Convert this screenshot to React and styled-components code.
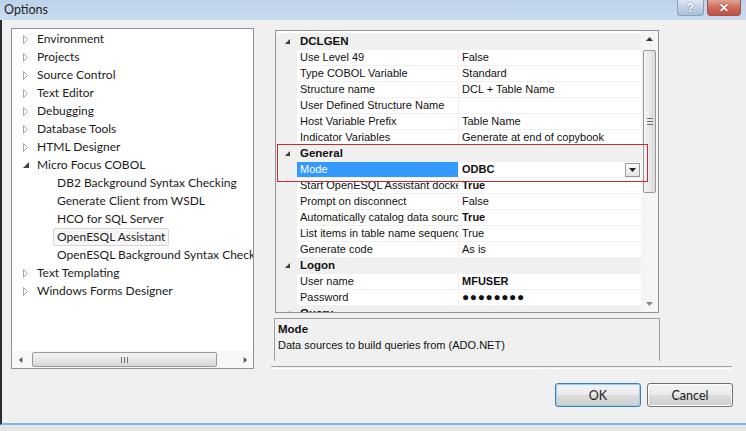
import React from 'react'
import styled, { createGlobalStyle } from 'styled-components'

const TREE = [
    { label: 'Environment', level: 0, state: 'closed' },
    { label: 'Projects', level: 0, state: 'closed' },
    { label: 'Source Control', level: 0, state: 'closed' },
    { label: 'Text Editor', level: 0, state: 'closed' },
    { label: 'Debugging', level: 0, state: 'closed' },
    { label: 'Database Tools', level: 0, state: 'closed' },
    { label: 'HTML Designer', level: 0, state: 'closed' },
    { label: 'Micro Focus COBOL', level: 0, state: 'open' },
    { label: 'DB2 Background Syntax Checking', level: 1 },
    { label: 'Generate Client from WSDL', level: 1 },
    { label: 'HCO for SQL Server', level: 1 },
    { label: 'OpenESQL Assistant', level: 1, selected: true },
    { label: 'OpenESQL Background Syntax Checking', level: 1 },
    { label: 'Text Templating', level: 0, state: 'closed' },
    { label: 'Windows Forms Designer', level: 0, state: 'closed' },
]

const PROPS = [
    { category: 'DCLGEN' },
    { name: 'Use Level 49', value: 'False' },
    { name: 'Type COBOL Variable', value: 'Standard' },
    { name: 'Structure name', value: 'DCL + Table Name' },
    { name: 'User Defined Structure Name', value: '' },
    { name: 'Host Variable Prefix', value: 'Table Name' },
    { name: 'Indicator Variables', value: 'Generate at end of copybook' },
    { category: 'General' },
    { name: 'Mode', value: 'ODBC', bold: true, selected: true, dropdown: true },
    { name: 'Start OpenESQL Assistant docked', value: 'True', bold: true },
    { name: 'Prompt on disconnect', value: 'False' },
    { name: 'Automatically catalog data sources', value: 'True', bold: true },
    { name: 'List items in table name sequence', value: 'True' },
    { name: 'Generate code', value: 'As is' },
    { category: 'Logon' },
    { name: 'User name', value: 'MFUSER', bold: true },
    { name: 'Password', value: '\u25CF\u25CF\u25CF\u25CF\u25CF\u25CF\u25CF\u25CF', bold: true, dots: true },
    { category: 'Query' },
]

const GlobalStyle = createGlobalStyle`
    html, body {
        margin: 0;
        padding: 0;
        background: #e6e6e6;
    }
    body {
        width: 746px;
        height: 431px;
        overflow: hidden;
    }
`

const Window = styled.div`
    width: 746px;
    height: 431px;
    display: flex;
    flex-direction: column;
    background: #e8e8e8;
    font-family: "Lato", "Liberation Sans", sans-serif;
    color: #1b1b1b;
`

const TitleBar = styled.div`
    height: 20px;
    flex: none;
    display: flex;
    justify-content: space-between;
    align-items: flex-start;
    background: linear-gradient(#bdd2eb, #cadcf0);
`

const Title = styled.span`
    font-size: 12.5px;
    padding: 2px 0 0 4px;
    color: #1e1e1e;
`

const CaptionButtons = styled.div`
    display: flex;
    gap: 3px;
    padding-right: 5px;
`

const CaptionButton = styled.div`
    width: ${p => (p.$close ? 34 : 27)}px;
    height: 16px;
    box-sizing: border-box;
    border: 1px solid ${p => (p.$close ? '#a05050' : '#8aa0bc')};
    border-top: none;
    border-radius: 0 0 4px 4px;
    background: ${p => p.$close
        ? 'linear-gradient(#e2a193, #cd6e5c 50%, #c2503c)'
        : 'linear-gradient(#dfe8f3, #c1d1e4 50%, #aebfd6)'};
    color: #fff;
    font: bold 12px "Liberation Sans", sans-serif;
    display: flex;
    align-items: center;
    justify-content: center;
    text-shadow: 0 0 2px ${p => (p.$close ? '#7a2a20' : '#56708f')};
`

const Body = styled.div`
    flex: 1;
    display: flex;
    flex-direction: column;
    background: #f0f0f0;
    border-left: 2px solid #2c2c2c;
    border-bottom: 2px solid #78b6e4;
    padding: 8px 13px 0 9px;
`

const BottomStrip = styled.div`
    height: 6px;
    flex: none;
    background: #e4e4e4;
`

const MainRow = styled.div`
    display: flex;
    height: 341px;
`

const TreePanel = styled.div`
    width: 243px;
    box-sizing: border-box;
    border: 1px solid #8e949c;
    background: #fff;
    display: flex;
    flex-direction: column;
`

const TreeList = styled.div`
    flex: 1;
    overflow: hidden;
    padding-top: 1px;
`

const TreeRow = styled.div`
    height: 18px;
    display: flex;
    align-items: center;
    padding-left: ${p => (p.$level ? 41 : 11)}px;
    font-size: 12px;
    white-space: nowrap;
`

const Expander = styled.span`
    width: 10px;
    flex: none;
    display: flex;
    align-items: center;
`

const TreeLabel = styled.span`
    box-sizing: border-box;
    height: 18px;
    line-height: 16px;
    padding: 0 3px;
    border: 1px solid ${p => (p.$selected ? '#d5d5d5' : 'transparent')};
    background: ${p => (p.$selected ? '#f6f6f6' : 'transparent')};
    border-radius: 2px;
`

const HScroll = styled.div`
    height: 17px;
    flex: none;
    display: flex;
    align-items: center;
    background: #f7f7f7;
`

const ArrowCell = styled.div`
    width: 17px;
    height: 17px;
    flex: none;
    display: flex;
    align-items: center;
    justify-content: center;
`

const HThumb = styled.div`
    width: 185px;
    height: 15px;
    margin-left: 3px;
    box-sizing: border-box;
    border: 1px solid #999;
    border-radius: 2px;
    background: linear-gradient(#f4f4f4, #e6e6e6 50%, #d6d6d6);
    display: flex;
    align-items: center;
    justify-content: center;
    gap: 2px;
`

const GripV = styled.span`
    width: 1px;
    height: 6px;
    background: #6f6f6f;
`

const RightColumn = styled.div`
    margin-left: 17px;
    width: 461px;
    display: flex;
    flex-direction: column;
`

const Grid = styled.div`
    position: relative;
    margin: 2px 0 0 4px;
    width: 384px;
    height: 283px;
    box-sizing: border-box;
    border: 1px solid #8e949c;
    background: #fff;
    display: flex;
`

const GridRows = styled.div`
    flex: 1;
    overflow: hidden;
    padding-top: 2px;
    font-family: "Liberation Sans", Arial, sans-serif;
    font-size: 11px;
    color: #111;
`

const CategoryRow = styled.div`
    height: 16px;
    display: flex;
    align-items: center;
    background: #f0f0f0;
    font-weight: bold;
    font-size: 11.5px;
`

const CategoryName = styled.span`
    padding-left: 3px;
`

const Margin = styled.div`
    width: 21px;
    height: 100%;
    flex: none;
    display: flex;
    align-items: center;
    justify-content: flex-end;
    padding-right: 7px;
    box-sizing: border-box;
    background: #f0f0f0;
`

const PropRow = styled.div`
    height: 16px;
    display: flex;
`

const NameCell = styled.div`
    width: 162px;
    flex: none;
    box-sizing: border-box;
    padding-left: 3px;
    border-top: 1px solid #f0f0f0;
    border-right: 1px solid #f0f0f0;
    background: ${p => (p.$selected ? '#3399ff' : '#fff')};
    color: ${p => (p.$selected ? '#fff' : 'inherit')};
    white-space: nowrap;
    overflow: hidden;
    line-height: 15px;
`

const ValueCell = styled.div`
    flex: 1;
    min-width: 0;
    box-sizing: border-box;
    padding-left: 3px;
    border-top: 1px solid #f0f0f0;
    display: flex;
    align-items: center;
    justify-content: space-between;
    line-height: 15px;
    font-weight: ${p => (p.$bold ? 'bold' : 'normal')};
    font-size: ${p => (p.$dots ? '12px' : '11px')};
    letter-spacing: ${p => (p.$dots ? '0.6px' : '0')};
    white-space: nowrap;
    overflow: hidden;
`

const DropButton = styled.div`
    width: 15px;
    height: 14px;
    margin-right: 1px;
    box-sizing: border-box;
    border: 1px solid #9a9a9a;
    background: linear-gradient(#fbfbfb, #e4e4e4);
    display: flex;
    align-items: center;
    justify-content: center;
`

const VScroll = styled.div`
    width: 17px;
    flex: none;
    display: flex;
    flex-direction: column;
    align-items: center;
    background: #f5f5f5;
`

const VThumb = styled.div`
    width: 13px;
    height: 143px;
    margin-top: 2px;
    box-sizing: border-box;
    border: 1px solid #979797;
    border-radius: 2px;
    background: linear-gradient(90deg, #f5f5f5, #e8e8e8 50%, #d8d8d8);
    display: flex;
    flex-direction: column;
    align-items: center;
    justify-content: center;
    gap: 2px;
`

const GripH = styled.span`
    width: 6px;
    height: 1px;
    background: #6f6f6f;
`

const Spacer = styled.div`
    flex: 1;
`

const Highlight = styled.div`
    position: absolute;
    left: 1px;
    top: 113px;
    width: 371px;
    height: 38px;
    box-sizing: border-box;
    border: 1px solid #c8282e;
    pointer-events: none;
`

const Description = styled.div`
    margin: 5px 0 0 3px;
    width: 386px;
    height: 44px;
    box-sizing: border-box;
    border: 1px solid #a0a0a0;
    border-bottom: none;
    padding: 2px 0 0 3px;
    font-family: "Liberation Sans", Arial, sans-serif;
    font-size: 11px;
    line-height: 16px;
    color: #111;
`

const DescTitle = styled.div`
    font-weight: bold;
    font-size: 11.5px;
`

const Separator = styled.div`
    margin-top: 5px;
    height: 1px;
    border-top: 1px solid #a0a0a0;
    border-bottom: 1px solid #fff;
`

const ButtonRow = styled.div`
    display: flex;
    justify-content: flex-end;
    gap: 6px;
    margin-top: 14px;
`

const DialogButton = styled.button`
    width: 86px;
    height: 24px;
    box-sizing: border-box;
    border: 1px solid ${p => (p.$default ? '#3c7fb1' : '#707070')};
    border-radius: 3px;
    background: linear-gradient(#f2f2f2, #ebebeb 50%, #dddddd 51%, #cfcfcf);
    box-shadow: inset 0 0 0 1px ${p => (p.$default ? '#98d1ef' : '#fcfcfc')};
    font-family: "Lato", "Liberation Sans", sans-serif;
    font-size: 12.5px;
    color: #1b1b1b;
    padding: 0;
`

function ClosedArrow() {
    return (
        <svg width="6" height="9" viewBox="0 0 6 9">
            <path d="M0.5 0.5 L4.5 4.5 L0.5 8.5 Z" fill="#fff" stroke="#a6a6a6" />
        </svg>
    )
}

function OpenArrow({ size = 6, color = '#404040' }) {
    return (
        <svg width={size} height={size} viewBox="0 0 6 6">
            <path d="M6 0 L6 6 L0 6 Z" fill={color} />
        </svg>
    )
}

function Tri({ dir, size = 7, color = '#222' }) {
    const paths = {
        up: 'M0 5 L3.5 1 L7 5 Z',
        down: 'M0 2 L7 2 L3.5 6 Z',
        left: 'M5 0 L5 7 L1 3.5 Z',
        right: 'M2 0 L2 7 L6 3.5 Z',
    }
    return (
        <svg width={size} height={size} viewBox="0 0 7 7">
            <path d={paths[dir]} fill={color} />
        </svg>
    )
}

function OptionsTree() {
    return (
        <TreePanel>
            <TreeList>
                {TREE.map(item => (
                    <TreeRow key={item.label} $level={item.level}>
                        {item.level === 0 && (
                            <Expander>
                                {item.state === 'open' ? <OpenArrow /> : <ClosedArrow />}
                            </Expander>
                        )}
                        <TreeLabel $selected={item.selected}>{item.label}</TreeLabel>
                    </TreeRow>
                ))}
            </TreeList>
            <HScroll>
                <ArrowCell><Tri dir="left" size={6} color="#555" /></ArrowCell>
                <HThumb><GripV /><GripV /><GripV /></HThumb>
                <Spacer />
                <ArrowCell><Tri dir="right" size={6} color="#555" /></ArrowCell>
            </HScroll>
        </TreePanel>
    )
}

function PropertyGrid() {
    return (
        <Grid>
            <GridRows>
                {PROPS.map(p => p.category ? (
                    <CategoryRow key={p.category}>
                        <Margin><OpenArrow size={5} color="#3a3a3a" /></Margin>
                        <CategoryName>{p.category}</CategoryName>
                    </CategoryRow>
                ) : (
                    <PropRow key={p.name}>
                        <Margin />
                        <NameCell $selected={p.selected}>{p.name}</NameCell>
                        <ValueCell $bold={p.bold} $dots={p.dots}>
                            <span>{p.value}</span>
                            {p.dropdown && (
                                <DropButton><Tri dir="down" size={7} color="#222" /></DropButton>
                            )}
                        </ValueCell>
                    </PropRow>
                ))}
            </GridRows>
            <VScroll>
                <ArrowCell><Tri dir="up" size={7} color="#333" /></ArrowCell>
                <VThumb><GripH /><GripH /><GripH /></VThumb>
                <Spacer />
                <ArrowCell><Tri dir="down" size={7} color="#888" /></ArrowCell>
            </VScroll>
            <Highlight />
        </Grid>
    )
}

export default function App() {
    return (
        <Window>
            <GlobalStyle />
            <TitleBar>
                <Title>Options</Title>
                <CaptionButtons>
                    <CaptionButton>?</CaptionButton>
                    <CaptionButton $close>✕</CaptionButton>
                </CaptionButtons>
            </TitleBar>
            <Body>
                <MainRow>
                    <OptionsTree />
                    <RightColumn>
                        <PropertyGrid />
                        <Description>
                            <DescTitle>Mode</DescTitle>
                            <div>Data sources to build queries from (ADO.NET)</div>
                        </Description>
                        <Spacer />
                        <Separator />
                    </RightColumn>
                </MainRow>
                <ButtonRow>
                    <DialogButton $default>OK</DialogButton>
                    <DialogButton>Cancel</DialogButton>
                </ButtonRow>
            </Body>
            <BottomStrip />
        </Window>
    )
}
